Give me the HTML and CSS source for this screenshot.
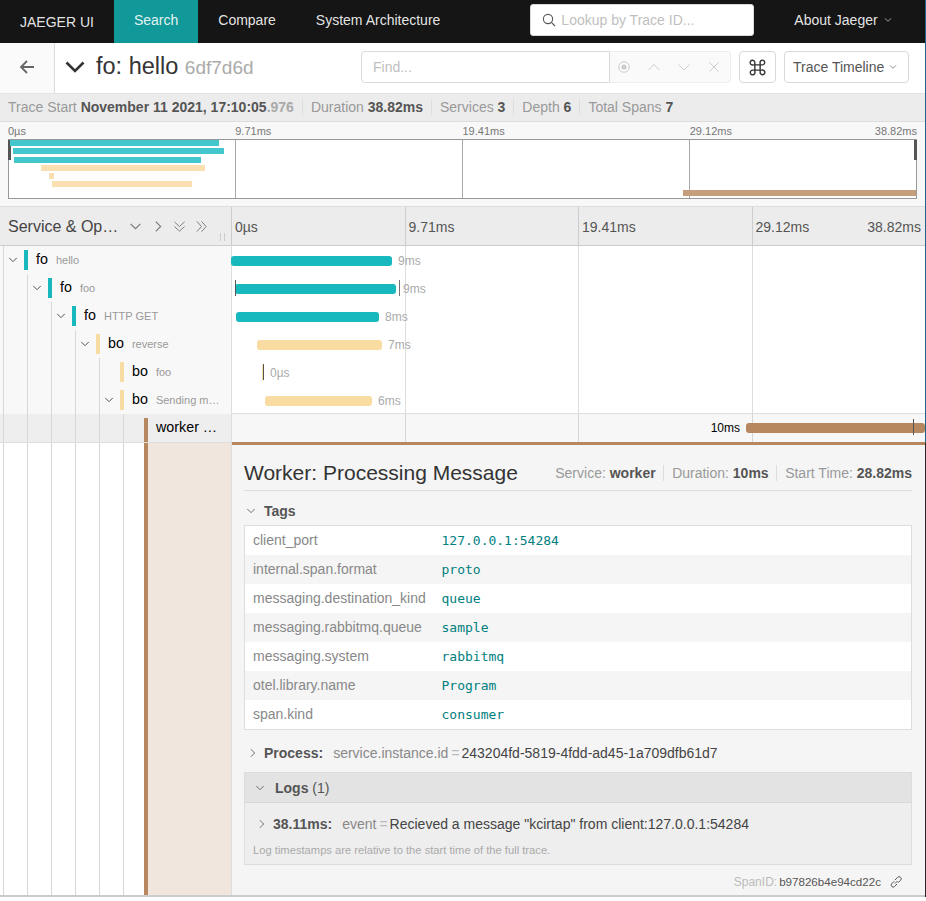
FILE: index.html
```html
<!DOCTYPE html>
<html lang="en">
<head>
<meta charset="utf-8">
<title>Jaeger UI</title>
<link rel="stylesheet" href="styles.css">
</head>
<body>
<svg class="sprite" width="0" height="0" aria-hidden="true">
  <symbol id="down" viewBox="0 0 12 12"><path d="M1.5 3.5 6 8l4.5-4.5" fill="none" stroke="currentColor" stroke-width="1"/></symbol>
  <symbol id="right" viewBox="0 0 12 12"><path d="M3.5 1.5 8 6l-4.5 4.5" fill="none" stroke="currentColor" stroke-width="1"/></symbol>
</svg>
<div class="app">
  <nav class="nav">
    <span class="nav-brand">JAEGER UI</span>
    <a class="nav-item nav-active">Search</a>
    <a class="nav-item">Compare</a>
    <a class="nav-item">System Architecture</a>
    <div class="lookup">
      <svg class="lookup-icon" viewBox="0 0 14 14"><circle cx="6" cy="6" r="4.6" fill="none" stroke="#555" stroke-width="1.1"/><path d="M9.4 9.4 13 13" stroke="#555" stroke-width="1.1"/></svg>
      <span>Lookup by Trace ID...</span>
    </div>
    <div class="about">About Jaeger <svg class="ico-8" viewBox="0 0 12 12"><use href="#down"/></svg></div>
  </nav>

  <header class="head">
    <div class="back">
      <svg viewBox="0 0 18 18" class="back-icon"><path d="M16 9H3M9 3 3 9l6 6" fill="none" stroke="#666" stroke-width="1.8"/></svg>
    </div>
    <svg class="title-chev" viewBox="0 0 20 14"><path d="M1.5 2.5 10 11l8.5-8.5" fill="none" stroke="#333" stroke-width="2.6"/></svg>
    <h1 class="title">fo: hello <small class="trace-id">6df7d6d</small></h1>
    <div class="finder">
      <div class="find-input">Find...</div>
      <div class="find-tools">
        <svg viewBox="0 0 14 14" class="tool"><circle cx="7" cy="7" r="5.3" fill="none" stroke="#ccc"/><circle cx="7" cy="7" r="2.6" fill="#ccc"/></svg>
        <svg viewBox="0 0 14 14" class="tool"><path d="M1.5 10 7 4.5l5.500 5.500" fill="none" stroke="#ccc"/></svg>
        <svg viewBox="0 0 14 14" class="tool"><path d="M1.5 4.500 7 10l5.500-5.500" fill="none" stroke="#ccc"/></svg>
        <svg viewBox="0 0 14 14" class="tool"><path d="M2.500 2.500l9 9m0-9-9 9" fill="none" stroke="#ccc"/></svg>
      </div>
    </div>
    <button class="cmd-btn"><svg viewBox="0 0 16 16" class="cmd-icon"><path d="M5.500 5.500h5v5h-5zM5.500 5.500H4A2.200 2.200 0 1 1 5.500 3.500zM10.500 5.500V4A2.200 2.200 0 1 1 12.500 5.500zM10.500 10.500H12A2.200 2.200 0 1 1 10.500 12.500zM5.500 10.500V12A2.200 2.200 0 1 1 3.500 10.500z" fill="none" stroke="#333" stroke-width="1.300"/></svg></button>
    <button class="view-btn">Trace Timeline <svg class="ico-8" viewBox="0 0 12 12"><use href="#down"/></svg></button>
  </header>

  <section class="summary">
    <span class="sum-item">Trace Start <b>November 11 2021, 17:10:05</b><b class="ms">.976</b></span>
    <span class="sum-item">Duration <b>38.82ms</b></span>
    <span class="sum-item">Services <b>3</b></span>
    <span class="sum-item">Depth <b>6</b></span>
    <span class="sum-item">Total Spans <b>7</b></span>
  </section>

  <section class="mini">
    <div class="mini-labels"><span>0µs</span><span>9.71ms</span><span>19.41ms</span><span>29.12ms</span><span class="mini-last">38.82ms</span></div>
    <div class="mini-canvas">
      <div class="mini-grid"><i></i><i></i><i></i><i></i></div>
      <div class="mini-handle mini-handle-l"></div>
      <div class="mini-handle mini-handle-r"></div>
      <div class="mini-row"><i class="c-fo" style="margin-left:1px;width:209px"></i></div>
      <div class="mini-row"><i class="c-fo" style="margin-left:4px;width:211px"></i></div>
      <div class="mini-row"><i class="c-fo" style="margin-left:5px;width:187px"></i></div>
      <div class="mini-row"><i class="c-bo" style="margin-left:32px;width:164px"></i></div>
      <div class="mini-row"><i class="c-bo" style="margin-left:40px;width:5px"></i></div>
      <div class="mini-row"><i class="c-bo" style="margin-left:43px;width:140px"></i></div>
      <div class="mini-row"><i class="c-wo" style="margin-left:674px;width:233px"></i></div>
    </div>
  </section>

  <section class="tl-head">
    <div class="tl-head-left">
      <span class="tl-head-title">Service &amp; Op…</span>
      <svg class="hd-ico hd-1" viewBox="0 0 12 12"><use href="#down"/></svg>
      <svg class="hd-ico hd-2" viewBox="0 0 12 12"><use href="#right"/></svg>
      <svg class="hd-ico hd-3" viewBox="0 0 14 14"><path d="M1.500 2 7 7l5.500-5M1.500 7 7 12l5.500-5" fill="none" stroke="#777"/></svg>
      <svg class="hd-ico hd-4" viewBox="0 0 14 14"><path d="M2 1.500 7 7l-5 5.500M7 1.500 12 7l-5 5.500" fill="none" stroke="#777"/></svg>
      <span class="grip"></span>
    </div>
    <div class="tl-head-right">
      <div class="tick-cell">0µs</div>
      <div class="tick-cell">9.71ms</div>
      <div class="tick-cell">19.41ms</div>
      <div class="tick-cell tick-last"><span>29.12ms</span><span>38.82ms</span></div>
    </div>
  </section>

  <section class="rows">
    <div class="grid-lines"><i></i><i></i><i></i><i></i></div>

    <div class="row">
      <div class="name">
        <span class="guide guide-t"><svg class="tog" viewBox="0 0 12 12"><use href="#down"/></svg></span>
        <span class="svc-bar c-fo-s"></span><span class="svc">fo</span><span class="op">hello</span>
      </div>
      <div class="track"><div class="bar c-fo-s" style="margin-left:-1px;width:161px"></div><span class="dur">9ms</span></div>
    </div>

    <div class="row">
      <div class="name">
        <span class="guide"></span><span class="guide guide-t"><svg class="tog" viewBox="0 0 12 12"><use href="#down"/></svg></span>
        <span class="svc-bar c-fo-s"></span><span class="svc">fo</span><span class="op">foo</span>
      </div>
      <div class="track"><div class="bar c-fo-s" style="margin-left:3px;width:161px"></div><span class="dur dur-2">9ms</span><i class="mark mark-1"></i><i class="mark mark-2"></i></div>
    </div>

    <div class="row">
      <div class="name">
        <span class="guide"></span><span class="guide"></span><span class="guide guide-t"><svg class="tog" viewBox="0 0 12 12"><use href="#down"/></svg></span>
        <span class="svc-bar c-fo-s"></span><span class="svc">fo</span><span class="op">HTTP GET</span>
      </div>
      <div class="track"><div class="bar c-fo-s" style="margin-left:4px;width:143px"></div><span class="dur">8ms</span></div>
    </div>

    <div class="row">
      <div class="name">
        <span class="guide"></span><span class="guide"></span><span class="guide"></span><span class="guide guide-t"><svg class="tog" viewBox="0 0 12 12"><use href="#down"/></svg></span>
        <span class="svc-bar c-bo-s"></span><span class="svc">bo</span><span class="op">reverse</span>
      </div>
      <div class="track"><div class="bar c-bo-s" style="margin-left:25px;width:125px"></div><span class="dur">7ms</span></div>
    </div>

    <div class="row">
      <div class="name">
        <span class="guide"></span><span class="guide"></span><span class="guide"></span><span class="guide"></span><span class="guide guide-t"></span>
        <span class="svc-bar c-bo-s"></span><span class="svc">bo</span><span class="op">foo</span>
      </div>
      <div class="track"><div class="bar bar-thin c-bo-s" style="margin-left:30px;width:1px"></div><span class="dur dur-2">0µs</span><i class="mark mark-3"></i></div>
    </div>

    <div class="row">
      <div class="name">
        <span class="guide"></span><span class="guide"></span><span class="guide"></span><span class="guide"></span><span class="guide guide-t"><svg class="tog" viewBox="0 0 12 12"><use href="#down"/></svg></span>
        <span class="svc-bar c-bo-s"></span><span class="svc">bo</span><span class="op op-cut">Sending m…</span>
      </div>
      <div class="track"><div class="bar c-bo-s" style="margin-left:33px;width:107px"></div><span class="dur">6ms</span></div>
    </div>

    <div class="row row-open">
      <div class="name">
        <span class="guide"></span><span class="guide"></span><span class="guide"></span><span class="guide"></span><span class="guide"></span><span class="guide guide-t"></span>
        <span class="svc-bar svc-bar-open c-wo-s"></span><span class="svc svc-open">worker …</span>
      </div>
      <div class="track track-open"><span class="dur dur-left">10ms</span><div class="bar c-wo-s" style="width:179px"></div><i class="mark mark-4"></i></div>
    </div>
  </section>

  <section class="detail-row">
    <div class="detail-left">
      <span class="guide"></span><span class="guide"></span><span class="guide"></span><span class="guide"></span><span class="guide"></span><span class="guide guide-t"></span>
      <span class="detail-stripe"></span>
    </div>
    <div class="detail">
      <div class="detail-head">
        <h2 class="detail-title">Worker: Processing Message</h2>
        <div class="detail-meta">
          <span class="meta-item">Service: <b>worker</b></span>
          <span class="meta-item">Duration: <b>10ms</b></span>
          <span class="meta-item">Start Time: <b>28.82ms</b></span>
        </div>
      </div>

      <div class="section-head"><svg class="sec-ico" viewBox="0 0 12 12"><use href="#down"/></svg><b>Tags</b></div>
      <table class="tags">
        <tr><td class="k">client_port</td><td class="v">127.0.0.1:54284</td></tr>
        <tr><td class="k">internal.span.format</td><td class="v">proto</td></tr>
        <tr><td class="k">messaging.destination_kind</td><td class="v">queue</td></tr>
        <tr><td class="k">messaging.rabbitmq.queue</td><td class="v">sample</td></tr>
        <tr><td class="k">messaging.system</td><td class="v">rabbitmq</td></tr>
        <tr><td class="k">otel.library.name</td><td class="v">Program</td></tr>
        <tr class="tags-last"><td class="k">span.kind</td><td class="v">consumer</td></tr>
      </table>

      <div class="process">
        <svg class="sec-ico" viewBox="0 0 12 12"><use href="#right"/></svg>
        <b class="process-label">Process:</b>
        <span class="kv-k">service.instance.id</span><span class="kv-eq">=</span><span class="kv-v">243204fd-5819-4fdd-ad45-1a709dfb61d7</span>
      </div>

      <div class="logs">
        <div class="logs-head"><svg class="sec-ico" viewBox="0 0 12 12"><use href="#down"/></svg><b>Logs</b>&nbsp;(1)</div>
        <div class="logs-body">
          <div class="log-row">
            <svg class="sec-ico" viewBox="0 0 12 12"><use href="#right"/></svg>
            <b class="log-time">38.11ms:</b>
            <span class="kv-k">event</span><span class="kv-eq">=</span><span class="kv-v">Recieved a message "kcirtap" from client:127.0.0.1:54284</span>
          </div>
          <div class="log-note">Log timestamps are relative to the start time of the full trace.</div>
        </div>
      </div>

      <div class="span-id">
        <span class="span-id-label">SpanID:</span>
        <span class="span-id-value">b97826b4e94cd22c</span>
        <svg class="link-ico" viewBox="0 0 14 14"><path d="M6 8.500 8.500 6M5.300 6.200 2.600 8.900a2 2 0 0 0 2.800 2.800L8 9M6 5l2.700-2.700a2 2 0 0 1 2.900 2.900L9 7.800" fill="none" stroke="#555" stroke-width="1"/></svg>
      </div>
    </div>
  </section>
</div>
<div class="edge"><i class="edge-top"></i><i class="edge-bottom"></i></div>
</body>
</html>
```

FILE: styles.css
```css
* { box-sizing: border-box; }
html, body { margin: 0; padding: 0; }
body {
  display: flex;
  align-items: flex-start;
  background: #fff;
  font-family: "Liberation Sans", Arial, sans-serif;
  font-size: 14px;
  color: #333;
  overflow: hidden;
}
.sprite { position: absolute; }
.app { width: 925px; flex: none; }

.edge { width: 1px; height: 897px; display: flex; flex-direction: column; }
.edge-top { height: 443px; background: #1f6489; }
.edge-bottom { flex: 1; background: #26292b; }

/* nav */
.nav {
  height: 43px;
  background: #151515;
  color: rgba(255, 255, 255, .9);
  display: flex;
  align-items: center;
}
.nav-brand { padding: 0 20px; }
.nav-item { height: 43px; line-height: 41px; padding: 0 20px; }
.nav-active { background: #119999; }
.lookup {
  margin-left: 70px;
  margin-top: -3px;
  width: 224px;
  height: 32px;
  background: #fff;
  border: 1px solid #d9d9d9;
  border-radius: 3px;
  display: flex;
  align-items: center;
  padding-left: 11px;
  color: #bfbfbf;
}
.lookup-icon { width: 14px; height: 14px; margin-right: 5px; }
.about { margin-left: 40px; display: flex; align-items: center; gap: 6px; margin-top: -4px; }
.ico-8 { width: 8px; height: 8px; color: inherit; }

/* header */
.head {
  height: 50px;
  display: flex;
  align-items: center;
  background: #fff;
}
.head > *:not(.back) { margin-bottom: 2px; }
.back {
  width: 55px;
  height: 50px;
  background: #fafafa;
  border-right: 1px solid #ddd;
  display: flex;
  align-items: center;
  justify-content: center;
}
.back-icon { width: 18px; height: 18px; margin-bottom: 2px; }
.title-chev { width: 20px; height: 14px; margin-left: 10px; }
.title { margin-left: 11px; margin-top: 0; margin-right: 0; font-size: 23.500px; font-weight: 400; color: #333; width: 254px; white-space: nowrap; line-height: 48px; }
.trace-id { font-size: 19px; color: #aaa; margin-left: 0; }
.finder {
  margin-left: 11px;
  width: 370px;
  height: 32px;
  display: flex;
}
.find-input {
  width: 249px;
  border: 1px solid #d9d9d9;
  border-radius: 4px 0 0 4px;
  color: #bfbfbf;
  padding-left: 11px;
  line-height: 30px;
}
.find-tools {
  flex: 1;
  background: #fafafa;
  border: 1px solid #eee;
  border-left: 0;
  border-radius: 0 4px 4px 0;
  display: flex;
  align-items: center;
  padding-left: 7px;
  gap: 16px;
}
.tool { width: 14px; height: 14px; }
.cmd-btn, .view-btn {
  height: 32px;
  background: #fff;
  border: 1px solid #d9d9d9;
  border-radius: 4px;
  font: inherit;
  color: #555;
  padding: 0;
  display: flex;
  align-items: center;
  justify-content: center;
}
.cmd-btn { width: 37px; margin-left: 8px; }
.cmd-icon { width: 17px; height: 17px; }
.view-btn { width: 125px; margin-left: 8px; gap: 5px; justify-content: flex-start; padding-left: 8px; }

/* summary */
.summary {
  height: 29px;
  background: #ececec;
  border-top: 1px solid #e4e4e4;
  border-bottom: 1px solid #ddd;
  padding: 0 0 2px 8px;
  display: flex;
  align-items: center;
  color: #999;
}
.sum-item b { color: #555; }
.sum-item b.ms { color: #aaa; }
.sum-item + .sum-item { margin-left: 8px; padding-left: 8px; border-left: 1px solid #ddd; }

/* minimap */
.mini {
  height: 85px;
  background: #f8f8f8;
  padding: 2px 8px 0;
  border-bottom: 1px solid #ddd;
}
.mini-labels { display: flex; height: 15px; font-size: 11px; color: #777; line-height: 15px; }
.mini-labels span { width: 227.250px; }
.mini-labels .mini-last { width: auto; margin-left: -50px; flex: 1; text-align: right; }
.mini-canvas {
  position: relative;
  width: 909px;
  height: 60px;
  background: #fff;
  border: 1px solid #999;
  display: flex;
  flex-direction: column;
}
.mini-grid { position: absolute; inset: 0; display: flex; }
.mini-grid i { flex: 1; border-left: 1px solid #aaa; }
.mini-grid i:first-child { border-left: 0; }
.mini-handle { position: absolute; top: 0; width: 3px; height: 20px; background: #555; }
.mini-handle-l { left: -1px; }
.mini-handle-r { right: -1px; }
.mini-row { position: relative; height: 8.400px; display: flex; }
.mini-row i { height: 6px; display: block; }
.c-fo { background: #43c6cc; }
.c-bo { background: #fae0b0; }
.c-wo { background: #c59e7c; }
.c-fo-s { background: #17b8be; }
.c-bo-s { background: #f8dca1; }
.c-wo-s { background: #b78860; }

/* timeline header */
.tl-head {
  height: 39px;
  display: flex;
  background: #ececec;
  border-bottom: 1px solid #ccc;
}
.tl-head-left {
  width: 232px;
  flex: none;
  border-right: 1px solid #ccc;
  display: flex;
  align-items: center;
  padding: 2px 0 0 8px;
  position: relative;
}
.tl-head-title { font-size: 16px; color: #444; width: 120px; white-space: nowrap; }
.hd-ico { width: 13px; height: 13px; color: #777; margin-top: -2px; }
.hd-1 { margin-left: 1px; }
.hd-2 { margin-left: 10px; }
.hd-3 { margin-left: 8px; }
.hd-4 { margin-left: 9px; }
.grip {
  position: absolute;
  right: 6px;
  bottom: 4px;
  width: 5px;
  height: 8px;
  border-left: 1px solid #ccc;
  border-right: 1px solid #ccc;
}
.tl-head-right { flex: 1; display: flex; }
.tick-cell { flex: 1; border-left: 1px solid #ccc; padding: 12px 4px 0 3px; color: #555; white-space: nowrap; }
.tick-cell:first-child { border-left: 0; }
.tick-last { display: flex; justify-content: space-between; }

/* rows */
.rows { position: relative; }
.grid-lines { position: absolute; left: 232px; right: 0; top: 0; bottom: 0; display: flex; }
.grid-lines i { flex: 1; border-left: 1px solid #ddd; }
.grid-lines i:first-child { border-left: 0; }
.row { height: 28px; display: flex; position: relative; }
.name {
  width: 232px;
  flex: none;
  background: #f8f8f8;
  border-right: 1px solid #ddd;
  display: flex;
  align-items: center;
  padding-left: 3px;
  height: 28px;
  white-space: nowrap;
  overflow: hidden;
}
.guide {
  width: 24px;
  height: 28px;
  flex: none;
  border-left: 1px solid #d8d8d8;
  display: flex;
  align-items: center;
  padding-left: 4px;
}
.guide-t { margin-right: -3px; }
.tog { width: 10px; height: 10px; color: #333; }
.svc-bar { width: 4px; height: 20px; flex: none; }
.svc { color: #000; margin-left: 8px; font-size: 14.300px; line-height: 28px; margin-top: -2px; }
.op { color: #999; font-size: 11px; margin-left: 8px; line-height: 28px; }
.track { flex: 1; display: flex; align-items: center; position: relative; padding-top: 1px; }
.bar { height: 10px; border-radius: 3px; flex: none; }
.bar-thin { height: 16px; border-radius: 0; }
.dur { font-size: 12px; color: #aaa; margin-left: 6px; padding-top: 1px; }
.dur-2 { margin-left: 7px; }
.mark { position: absolute; width: 1px; height: 16px; top: 6px; background: #555; }
.mark-1 { left: 3px; }
.mark-2 { left: 167px; background: #777; }
.mark-3 { left: 31px; }
.mark-4 { left: 681px; }

.row-open .name { background: #eee; }
.row-open .guide, .row-open .svc-bar { align-self: flex-start; }
.svc-bar-open { height: 24px; margin-top: 4px; }
.track-open { background: rgba(0, 0, 0, .03); border-top: 1px solid #ddd; margin-top: -1px; height: 29px; justify-content: flex-end; padding: 0 0 1px; }
.track-open .mark { top: 5px; }
.dur-left { color: #000; margin: 0 6px 0 0; }

/* detail */
.detail-row { display: flex; height: 455px; border-bottom: 2px solid #ccc; }
.detail-left {
  width: 232px;
  flex: none;
  display: flex;
  padding-left: 3px;
  border-right: 1px solid #ddd;
  border-top: 1px solid #ddd;
  background: #fff;
}
.detail-left .guide { height: 100%; }
.detail-stripe { width: 87px; flex: none; border-left: 4px solid #b78860; background: #f0e6dd; }
.detail {
  flex: 1;
  background: #f5f5f5;
  border-top: 3px solid #b78860;
  padding: 15px 13px 0 12px;
  min-width: 0;
}
.detail-head {
  display: flex;
  align-items: center;
  justify-content: space-between;
  height: 31px;
  border-bottom: 1px solid #ddd;
  padding-bottom: 5px;
}
.detail-title { margin: 0; font-size: 21px; font-weight: 400; color: #333; }
.detail-meta { display: flex; color: #999; }
.meta-item b { color: #555; }
.meta-item + .meta-item { margin-left: 7.500px; padding-left: 8px; border-left: 1px solid #ddd; }

.section-head { display: flex; align-items: center; margin-top: 10px; height: 20px; color: #555; padding-left: 2px; }
.sec-ico { width: 10px; height: 10px; color: #555; flex: none; }
.section-head b { margin-left: 8px; }
.tags {
  width: 100%;
  margin-top: 4px;
  border-collapse: collapse;
  border: 1px solid #ddd;
  background: #fff;
}
.tags td { height: 29px; padding: 0; }
.tags .tags-last td { height: 30px; }
.tags tr:nth-child(even) { background: #f5f5f5; }
.tags .k { width: 197px; padding-left: 8px; color: #888; }
.v { font-family: "DejaVu Sans Mono", monospace; font-size: 13px; color: #008080; }

.process { display: flex; align-items: center; height: 20px; margin-top: 13px; padding-left: 4px; }
.process-label { margin-left: 6px; color: #555; }
.kv-k { color: #888; margin-left: 10px; }
.kv-eq { color: #bbb; margin: 0 2px 0 3px; }
.kv-v { color: #444; }

.logs { margin-top: 9px; border: 1px solid #ddd; background: #eee; height: 93px; }
.logs-head {
  height: 30px;
  background: #e3e3e3;
  border-bottom: 1px solid #d8d8d8;
  display: flex;
  align-items: center;
  padding-left: 10px;
  color: #555;
}
.logs-head b { margin-left: 10px; }
.logs-body { padding: 11px 8px 0; }
.log-row { display: flex; align-items: center; height: 20px; padding-left: 4px; }
.log-time { margin-left: 6px; color: #555; }
.log-note { margin-top: 10px; font-size: 11.200px; color: #aaa; }

.span-id { display: flex; align-items: center; justify-content: flex-end; height: 32px; padding: 1px 9px 0 0; gap: 2px; }
.span-id-label { color: #bbb; font-size: 12px; }
.span-id-value { color: #555; font-size: 11.600px; }
.link-ico { width: 14px; height: 14px; margin-left: 6px; }
```
